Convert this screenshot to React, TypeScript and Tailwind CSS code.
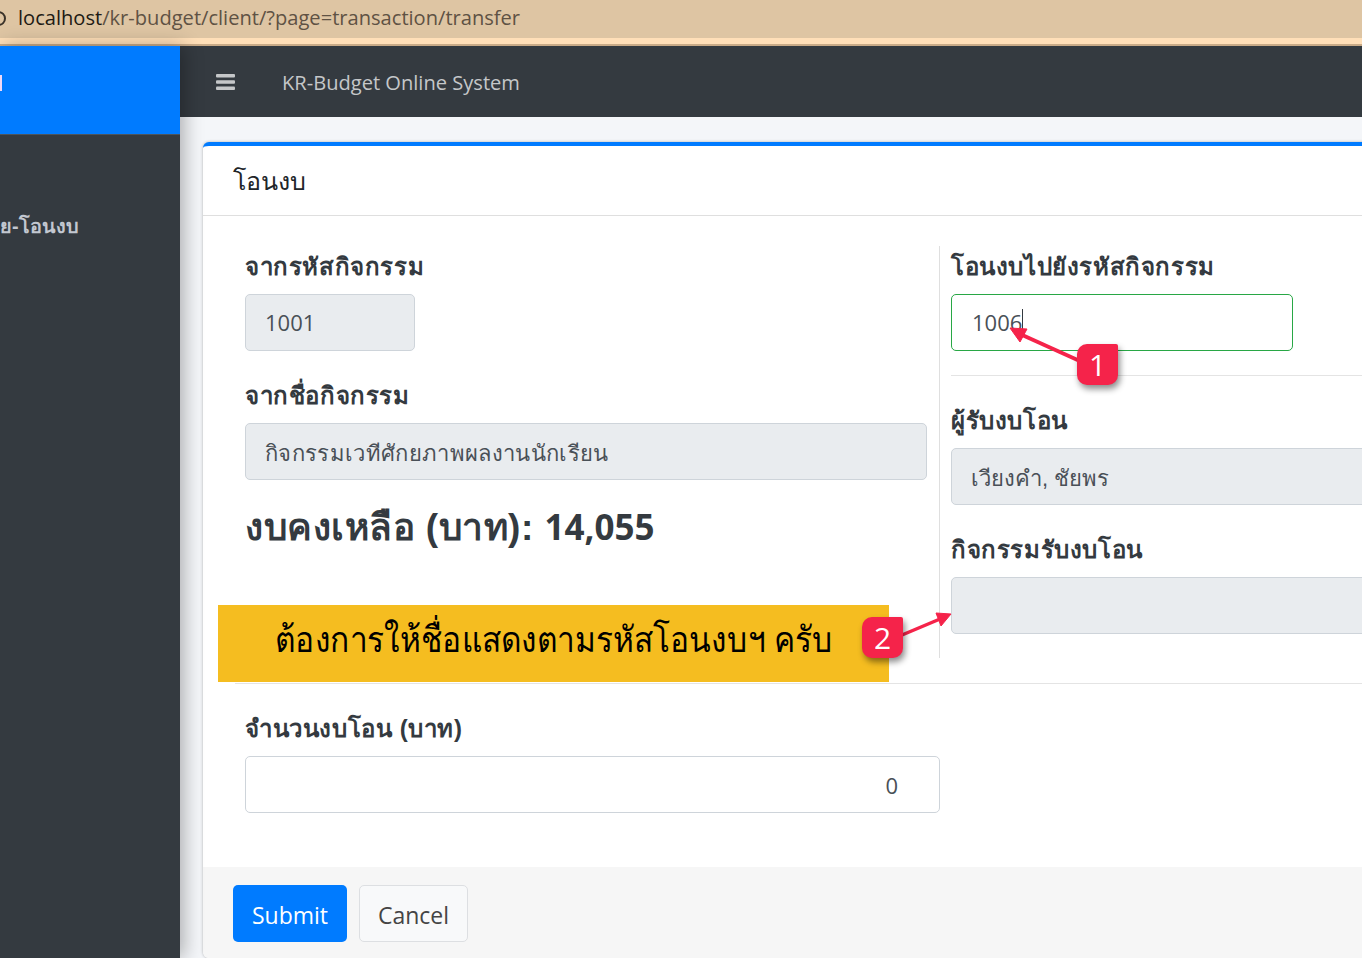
const latin = "font-['Open_Sans',sans-serif]"
const thai = "font-['Liberation_Sans',sans-serif]"

function Label({ children }: { children: string }) {
  return <label className={`block h-[28px] text-[24px] leading-[30px] font-bold tracking-[0.6px] text-[#343a40] ${thai}`}>{children}</label>
}

function Field({ value, className = "" }: { value?: string; className?: string }) {
  return (
    <div className={`mt-[14px] h-[57px] rounded-[5px] border border-[#ced4da] bg-[#e9ecef] px-[19px] text-[#495057] ${className}`}>
      {value}
    </div>
  )
}

function Badge({ n, className }: { n: string; className: string }) {
  return (
    <div className={`absolute flex h-[41px] w-[41px] items-center justify-center rounded-[10px] rounded-tr-[2px] bg-[#f5234a] text-[30px] leading-none text-white shadow-[2px_4px_6px_rgba(0,0,0,0.45)] ${className}`}>
      {n}
    </div>
  )
}

export default function App() {
  return (
    <div className={`relative flex h-[958px] w-[1362px] flex-col overflow-hidden bg-[#f4f6f9] ${latin}`}>
      {/* address bar */}
      <div className="relative h-[38px] shrink-0 bg-[#dec5a3] pl-[18px] text-[20.1px] leading-[35px] text-[#5f5244]">
        <span className="absolute left-[-9px] top-[11px] h-[15px] w-[15px] rounded-full border-2 border-[#3a3229]" />
        <span className="text-[#201a14]">localhost</span>/kr-budget/client/?page=transaction/transfer
      </div>
      <div className="h-[8px] shrink-0 border-b-2 border-[#c9ab88] bg-[#ffdfb8]" />

      <div className="flex min-h-0 flex-1">
        {/* sidebar */}
        <aside className="z-10 w-[180px] shrink-0 bg-[#343a40] shadow-[4px_0_18px_rgba(0,0,0,0.3)]">
          <div className="h-[89px] border-b border-[#4b545c] bg-[#007bff] pt-[29px]">
            <div className="h-[16px] w-[2px] bg-[#f0d8f5]" />
          </div>
          <p className={`mt-[76px] text-[19.8px] leading-[30px] font-bold text-[#c2c7d0] ${thai}`}>ย-โอนงบ</p>
        </aside>

        <main className="flex min-w-0 flex-1 flex-col">
          {/* navbar */}
          <nav className="flex h-[71px] shrink-0 items-center bg-[#343a40] pl-[36px]">
            <svg width="19" height="16" viewBox="0 0 19 16" className="text-[#c5c7c9]" fill="currentColor">
              <rect width="19" height="3.4" rx="1" />
              <rect y="6.3" width="19" height="3.4" rx="1" />
              <rect y="12.6" width="19" height="3.4" rx="1" />
            </svg>
            <span className="ml-[47px] pt-[3px] text-[20.1px] text-[#c5c7c9]">KR-Budget Online System</span>
          </nav>

          {/* card */}
          <div className="ml-[23px] mt-[25px] flex h-[816px] w-[1300px] flex-col rounded-[6px] border-t-4 border-[#007bff] bg-white shadow-[0_0_3px_rgba(0,0,0,0.3)]">
            <div className={`h-[70px] border-b border-[#dfdfdf] pl-[30px] text-[25px] leading-[70px] text-[#212529] ${thai}`}>โอนงบ</div>

            <div className="flex-1 pl-[42px] pt-[30px]">
              <div className="flex h-[412px]">
                <div className="w-[694px] shrink-0 pr-[12px]">
                  <div className="pt-[6px]"><Label>จากรหัสกิจกรรม</Label></div>
                  <Field value="1001" className="w-[170px] text-[22px] leading-[55px]" />
                  <div className="mt-[30px]"><Label>จากชื่อกิจกรรม</Label></div>
                  <Field value="กิจกรรมเวทีศักยภาพผลงานนักเรียน" className={`text-[22px] leading-[59px] tracking-[0.33px] ${thai}`} />
                  <h2 className="mt-[20px] text-[35px] leading-[54px] font-bold text-[#343a40]">
                    <span className={`text-[37px] tracking-[0.5px] ${thai}`}>งบคงเหลือ (บาท): </span>14,055
                  </h2>
                </div>
                <div className="flex-1 border-l border-[#dfdfdf] pl-[11px]">
                  <div className="pt-[6px]"><Label>โอนงบไปยังรหัสกิจกรรม</Label></div>
                  <div className="mt-[14px] flex h-[57px] w-[342px] items-center rounded-[5px] border border-[#28a745] pl-[20px] text-[22px] text-[#495057]">
                    1006
                    <span className="h-[28px] w-px bg-[#343a40]" />
                  </div>
                  <div className="mt-[24px] border-t border-[#e4e4e4] pt-[30px]"><Label>ผู้รับงบโอน</Label></div>
                  <Field value="เวียงคำ, ชัยพร" className={`text-[22px] leading-[59px] ${thai}`} />
                  <div className="mt-[30px]"><Label>กิจกรรมรับงบโอน</Label></div>
                  <Field />
                </div>
              </div>

              <div className="-ml-[10px] mt-[25px] border-t border-[#e4e4e4] pl-[10px] pt-[30px]">
                <Label>จำนวนงบโอน (บาท)</Label>
                <div className="mt-[14px] h-[57px] w-[695px] rounded-[5px] border border-[#ced4da] pr-[41px] text-right text-[22px] leading-[57px] text-[#495057]">0</div>
              </div>
            </div>

            {/* footer */}
            <div className="flex h-[91px] shrink-0 items-start gap-[12px] rounded-bl-[6px] bg-[#f6f6f6] pl-[30px] pt-[18px]">
              <button className="h-[57px] w-[114px] rounded-[5px] bg-[#007bff] pt-[3px] text-[23px] text-white">Submit</button>
              <button className="h-[57px] w-[109px] rounded-[5px] border border-[#dddfe2] bg-[#f8f9fa] pt-[3px] text-[23px] text-[#444]">Cancel</button>
            </div>
          </div>
        </main>
      </div>

      {/* annotations over the page */}
      <div className={`absolute left-[218px] top-[605px] flex h-[77px] w-[671px] items-center justify-center bg-[#f5bd20] pb-[8px] text-[36px] text-black ${thai}`}>
        <span className="scale-x-[0.88] whitespace-nowrap">ต้องการให้ชื่อแสดงตามรหัสโอนงบฯ ครับ</span>
      </div>
      <svg className="absolute left-0 top-0" width="1362" height="958" fill="#f5234a" stroke="#f5234a">
        <line x1="1082" y1="362" x2="1020" y2="334" strokeWidth="4" />
        <polygon points="1010,328 1027,329 1020,342" />
        <line x1="902" y1="635" x2="940" y2="619" strokeWidth="3.5" />
        <polygon points="951,614 936,613 941,626" />
      </svg>
      <Badge n="1" className="left-[1077px] top-[344px]" />
      <Badge n="2" className="left-[862px] top-[617px]" />
    </div>
  )
}
